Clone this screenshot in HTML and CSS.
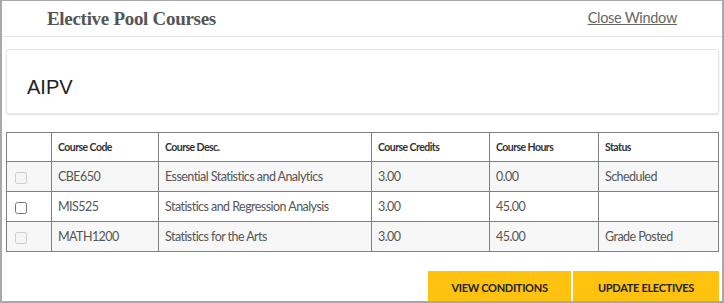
FILE: index.html
```html
<!DOCTYPE html>
<html lang="en">
<head>
    <meta charset="UTF-8">
    <meta name="viewport" content="width=device-width, initial-scale=1.0">
    <title>Elective Pool Courses</title>
    <link rel="stylesheet" href="styles.css">
</head>
<body>
    <div class="modal">
        <div class="modal-header">
            <h1>Elective Pool Courses</h1>
            <a href="#" class="close-link">Close Window</a>
        </div>

        <div class="modal-body">
            <div class="pool-card">
                <h2>AIPV</h2>
            </div>

            <table class="courses">
                <thead>
                    <tr>
                        <th class="col-check"></th>
                        <th class="col-code">Course Code</th>
                        <th class="col-desc">Course Desc.</th>
                        <th class="col-credits">Course Credits</th>
                        <th class="col-hours">Course Hours</th>
                        <th class="col-status">Status</th>
                    </tr>
                </thead>
                <tbody>
                    <tr>
                        <td><input type="checkbox" disabled></td>
                        <td>CBE650</td>
                        <td>Essential Statistics and Analytics</td>
                        <td>3.00</td>
                        <td>0.00</td>
                        <td>Scheduled</td>
                    </tr>
                    <tr>
                        <td><input type="checkbox"></td>
                        <td>MIS525</td>
                        <td>Statistics and Regression Analysis</td>
                        <td>3.00</td>
                        <td>45.00</td>
                        <td></td>
                    </tr>
                    <tr>
                        <td><input type="checkbox" disabled></td>
                        <td>MATH1200</td>
                        <td>Statistics for the Arts</td>
                        <td>3.00</td>
                        <td>45.00</td>
                        <td>Grade Posted</td>
                    </tr>
                </tbody>
            </table>

            <div class="actions">
                <button class="btn btn-conditions">View Conditions</button>
                <button class="btn btn-update">Update Electives</button>
            </div>
        </div>
    </div>
</body>
</html>
```

FILE: styles.css
```css
body {
    margin: 0;
    background: white;
    font-family: Lato, "Open Sans", sans-serif;
}
.modal {
    width: 724px;
    height: 303px;
    box-sizing: border-box;
    border: 2px solid #a8a8a8;
    border-top-width: 1px;
    overflow: hidden;
    background: white;
}
.modal-header {
    display: flex;
    justify-content: space-between;
    align-items: center;
    height: 35px;
    padding: 0 45px;
    border-bottom: 1px solid #e3e3e3;
}
.modal-header h1 {
    margin: 0;
    font-family: "Liberation Serif", serif;
    font-size: 19px;
    letter-spacing: -0.3px;
    font-weight: bold;
    color: #555;
}
.close-link {
    margin-top: -3px;
    color: #666;
    font-size: 14.5px;
    letter-spacing: -0.3px;
    text-decoration: underline;
}
.modal-body {
    padding: 12px 3px 0 4px;
}
.pool-card {
    padding: 26px 20px 15px;
    border: 1px solid #e6e6e6;
    border-radius: 3px;
    box-shadow: 0 1px 2px rgba(0,0,0,0.12);
}
.pool-card h2 {
    margin: 0;
    font-family: "Liberation Sans", Arial, sans-serif;
    font-size: 20px;
    line-height: 22px;
    font-weight: normal;
    color: #222;
}
.courses {
    width: 100%;
    margin-top: 18px;
    border-collapse: collapse;
    border: 1px solid #777;
    font-size: 12.5px;
    letter-spacing: -0.55px;
    color: #555;
}
.courses th,
.courses td {
    border: 1px solid #808080;
    padding: 0 6px;
    text-align: left;
    vertical-align: middle;
}
.courses th {
    height: 28px;
    font-size: 10.5px;
    letter-spacing: -0.55px;
    font-weight: bold;
    color: #333;
}
.courses td {
    height: 29px;
}
.courses tbody tr:nth-child(odd) {
    background: #f7f7f7;
}
.courses input {
    width: 12px;
    height: 12px;
    margin: 0 0 0 2px;
    vertical-align: middle;
}
.col-check { width: 32px; }
.col-code { width: 94px; }
.col-desc { width: 200px; }
.col-credits { width: 105px; }
.col-hours { width: 96px; }
.actions {
    display: flex;
    justify-content: flex-end;
    gap: 2px;
    margin-top: 19px;
}
.btn {
    height: 32px;
    padding: 0;
    border: none;
    background: #fec20f;
    color: #222;
    font-family: Lato, sans-serif;
    font-size: 11px;
    letter-spacing: -0.3px;
    font-weight: bold;
    text-transform: uppercase;
}
.btn-conditions { width: 143px; }
.btn-update { width: 146px; }
```
